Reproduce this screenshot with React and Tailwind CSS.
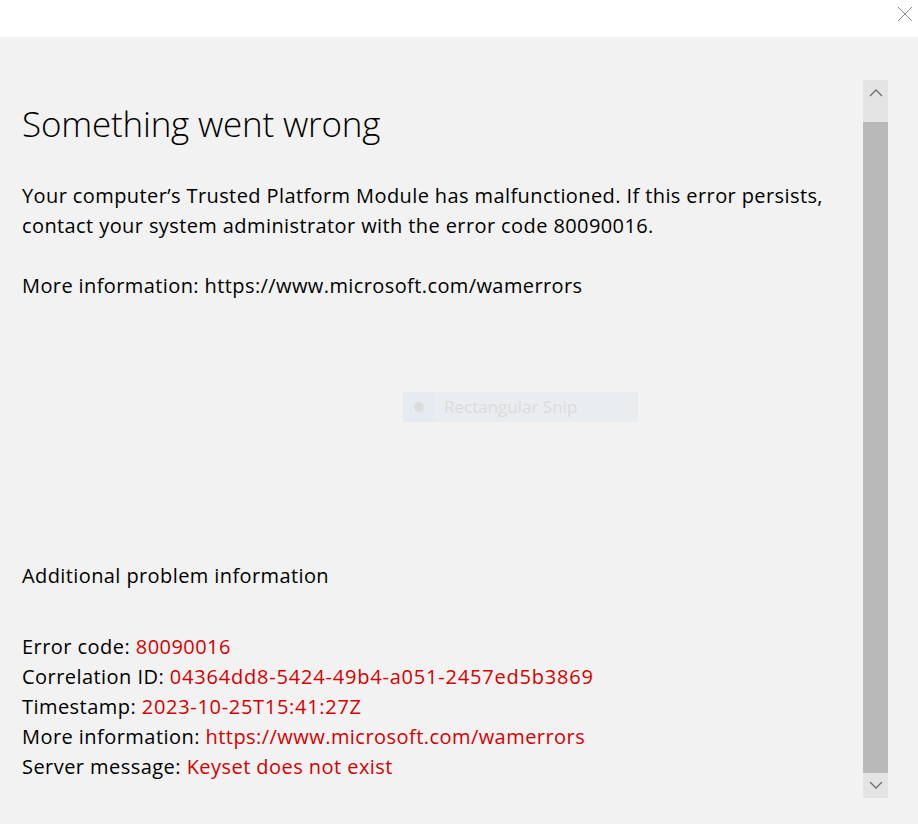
export default function App() {
  return (
    <div className="w-[918px] h-[824px] bg-[#f2f2f2] flex flex-col overflow-hidden font-['Open_Sans',sans-serif]">
      <div className="h-[37px] bg-white flex justify-end items-start shrink-0">
        <svg width="16" height="16" viewBox="0 0 16 16" className="mt-[6px] mr-[5px]">
          <path d="M1 1 L15 15 M15 1 L1 15" stroke="#8a8a8a" strokeWidth="1" fill="none" />
        </svg>
      </div>
      <div className="flex flex-1 min-h-0">
        <div className="flex-1 pl-[22px] pt-[65px] text-black">
          <h1 className="text-[35px] leading-[44px] font-light tracking-[-0.2px]">Something went wrong</h1>
          <p className="mt-[35px] text-[20px] leading-[30px] tracking-[0.4px]">
            Your computer’s Trusted Platform Module has malfunctioned. If this error persists,
            <br />
            contact your system administrator with the error code 80090016.
          </p>
          <p className="mt-[30px] text-[20px] leading-[30px] tracking-[0.4px]">More information: https://www.microsoft.com/wamerrors</p>
          <div className="ml-[381px] mt-[91px] w-[235px] h-[30px] bg-[#e9edf0] flex items-center">
            <div className="w-[31px] h-[30px] bg-[#e5ebf1] flex items-center justify-center">
              <div className="w-[10px] h-[10px] rounded-full bg-[#dcdcdc]" />
            </div>
            <span className="ml-[10px] text-[17px] text-[#dbdbdb]">Rectangular Snip</span>
          </div>
          <p className="mt-[139px] text-[20px] leading-[30px] tracking-[0.4px]">Additional problem information</p>
          <div className="mt-[41px] text-[20px] leading-[30px] tracking-[0.45px]">
            <div>Error code: <span className="text-[#d40000]">80090016</span></div>
            <div>Correlation ID: <span className="text-[#d40000] tracking-[0.8px]">04364dd8-5424-49b4-a051-2457ed5b3869</span></div>
            <div>Timestamp: <span className="text-[#d40000] tracking-[0.7px]">2023-10-25T15:41:27Z</span></div>
            <div>More information: <span className="text-[#d40000]">https://www.microsoft.com/wamerrors</span></div>
            <div>Server message: <span className="text-[#d40000]">Keyset does not exist</span></div>
          </div>
        </div>
        <div className="w-[25px] mt-[43px] mb-[26px] mr-[30px] flex flex-col shrink-0">
          <div className="h-[42px] bg-[#e4e4e4] flex justify-center pt-[9px]">
            <svg width="14" height="8" viewBox="0 0 14 8">
              <path d="M1 7 L7 1 L13 7" stroke="#6d6d6d" strokeWidth="1.3" fill="none" />
            </svg>
          </div>
          <div className="flex-1 bg-[#b9b9b9]" />
          <div className="h-[25px] bg-[#e4e4e4] flex justify-center pt-[8px]">
            <svg width="14" height="8" viewBox="0 0 14 8">
              <path d="M1 1 L7 7 L13 1" stroke="#6d6d6d" strokeWidth="1.3" fill="none" />
            </svg>
          </div>
        </div>
      </div>
    </div>
  );
}
